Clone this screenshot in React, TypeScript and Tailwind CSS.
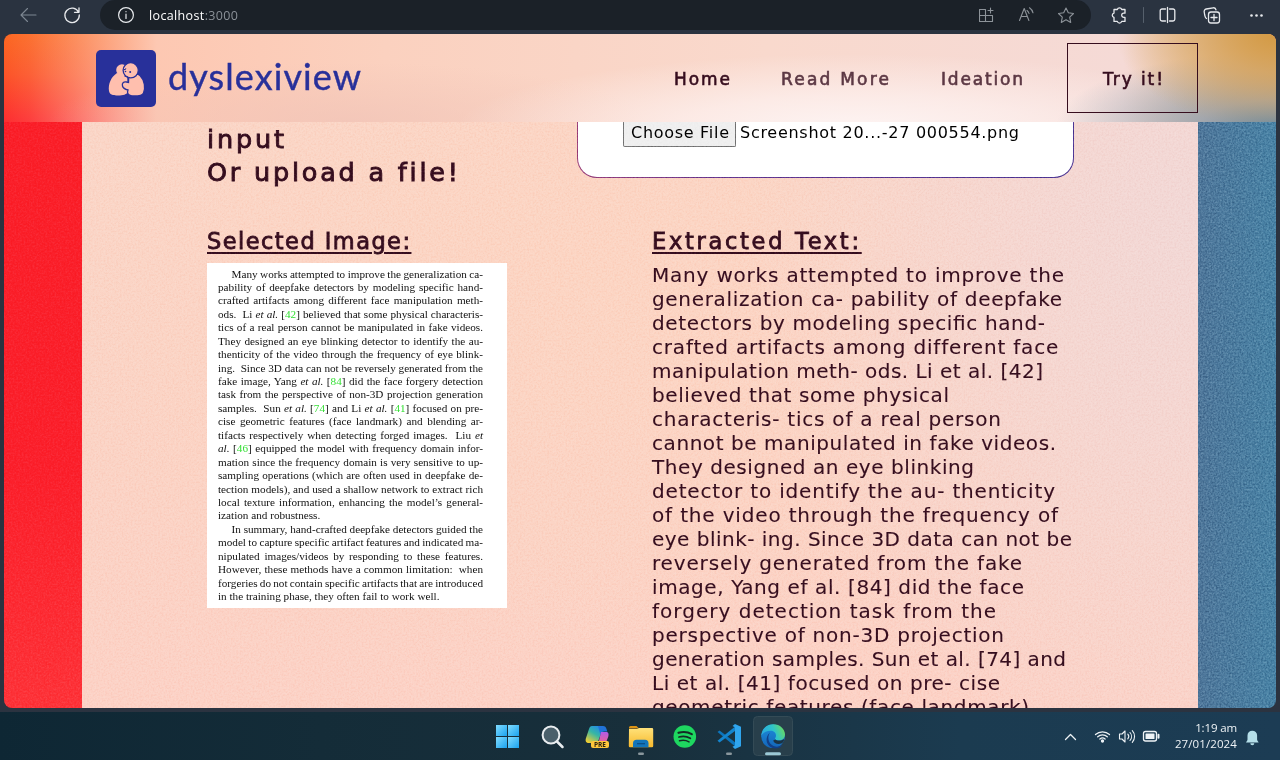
import { useLayoutEffect, useRef, type ReactNode } from 'react';

/** Text on one line whose tracking is adjusted so that it is `w` pixels wide. */
function Fit({ w, className = '', children }: { w: number; className?: string; children: ReactNode }) {
  const ref = useRef<HTMLSpanElement>(null);
  useLayoutEffect(() => {
    const el = ref.current;
    if (!el) return;
    el.style.letterSpacing = '0px';
    const n = (el.textContent || '').length;
    el.style.letterSpacing = `${(w - el.getBoundingClientRect().width) / Math.max(1, n - 1)}px`;
  }, [w]);
  return (
    <span ref={ref} className={`inline-block whitespace-nowrap ${className}`}>
      {children}
    </span>
  );
}

const extracted: [string, number][] = [
  ['Many works attempted to improve the', 412],
  ['generalization ca- pability of deepfake', 410],
  ['detectors by modeling speciﬁc hand-', 393],
  ['crafted artifacts among different face', 406],
  ['manipulation meth- ods. Li et al. [42]', 391],
  ['believed that some physical', 297],
  ['characteris- tics of a real person', 349],
  ['cannot be manipulated in fake videos.', 404],
  ['They designed an eye blinking', 322],
  ['detector to identify the au- thenticity', 403],
  ['of the video through the frequency of', 406],
  ['eye blink- ing. Since 3D data can not be', 420],
  ['reversely generated from the fake', 370],
  ['image, Yang ef al. [84] did the face', 372],
  ['forgery detection task from the', 344],
  ['perspective of non-3D projection', 352],
  ['generation samples. Sun et al. [74] and', 414],
  ['Li et al. [41] focused on pre- cise', 348],
  ['geometric features (face landmark)', 377],
];

const G = ({ children }: { children: string }) => <span className="text-[#35e035]">{children}</span>;

const paper: { t: ReactNode; indent?: boolean; end?: boolean }[] = [
  { t: 'Many works attempted to improve the generalization ca-', indent: true },
  { t: 'pability of deepfake detectors by modeling specific hand-' },
  { t: 'crafted artifacts among different face manipulation meth-' },
  { t: <>ods.&nbsp; Li <i>et al.</i> [<G>42</G>] believed that some physical characteris-</> },
  { t: 'tics of a real person cannot be manipulated in fake videos.' },
  { t: 'They designed an eye blinking detector to identify the au-' },
  { t: 'thenticity of the video through the frequency of eye blink-' },
  { t: <>ing.&nbsp; Since 3D data can not be reversely generated from the</> },
  { t: <>fake image, Yang <i>et al.</i> [<G>84</G>] did the face forgery detection</> },
  { t: 'task from the perspective of non-3D projection generation' },
  { t: <>samples.&nbsp; Sun <i>et al.</i> [<G>74</G>] and Li <i>et al.</i> [<G>41</G>] focused on pre-</> },
  { t: 'cise geometric features (face landmark) and blending ar-' },
  { t: <>tifacts respectively when detecting forged images.&nbsp; Liu <i>et</i></> },
  { t: <><i>al.</i> [<G>46</G>] equipped the model with frequency domain infor-</> },
  { t: 'mation since the frequency domain is very sensitive to up-' },
  { t: 'sampling operations (which are often used in deepfake de-' },
  { t: 'tection models), and used a shallow network to extract rich' },
  { t: 'local texture information, enhancing the model’s general-' },
  { t: 'ization and robustness.', end: true },
  { t: 'In summary, hand-crafted deepfake detectors guided the', indent: true },
  { t: 'model to capture specific artifact features and indicated ma-' },
  { t: 'nipulated images/videos by responding to these features.' },
  { t: <>However, these methods have a common limitation:&nbsp; when</> },
  { t: 'forgeries do not contain specific artifacts that are introduced' },
  { t: 'in the training phase, they often fail to work well.', end: true },
];

function PaperLine({ t, indent, end }: { t: ReactNode; indent?: boolean; end?: boolean }) {
  const ref = useRef<HTMLSpanElement>(null);
  useLayoutEffect(() => {
    const el = ref.current;
    if (!el || end) return;
    el.style.wordSpacing = '0px';
    const gaps = ((el.textContent || '').match(/[ \u00a0]/g) || []).length;
    const target = indent ? 251.5 : 265;
    el.style.wordSpacing = `${(target - el.getBoundingClientRect().width) / gaps}px`;
  }, [indent, end]);
  return (
    <div className={`h-[13.45px] whitespace-nowrap ${indent ? 'pl-[13.5px]' : ''}`}>
      <span ref={ref} className="inline-block">{t}</span>
    </div>
  );
}

function Grain() {
  return (
    <svg className="h-full w-full" aria-hidden="true">
      <filter id="grain" x="0" y="0" width="100%" height="100%" colorInterpolationFilters="sRGB">
        <feTurbulence type="fractalNoise" baseFrequency="0.55" numOctaves="2" seed="4" />
        <feColorMatrix type="matrix" values="2 0 0 0 -0.5  2 0 0 0 -0.5  2 0 0 0 -0.5  0 0 0 0 1" />
      </filter>
      <rect width="100%" height="100%" filter="url(#grain)" />
    </svg>
  );
}

const line = { fill: 'none', stroke: 'currentColor', strokeLinecap: 'round', strokeLinejoin: 'round' } as const;

function BrowserBar() {
  return (
    <div className="flex h-[34px] items-start bg-[#2a3340] text-[#e8eaed]">
      <svg width="100" height="30" {...line} strokeWidth="1.1">
        <path d="M36 15H21M27.5 8.500 21 15l6.500 6.500" stroke="#7d8792" />
        <path d="M78.600 12.200A7.200 7.200 0 1 0 79.300 15M79 7.800v4.500h-4.500" strokeWidth="1.300" />
      </svg>
      <div className="flex h-[30px] w-[991px] items-center rounded-[15px] bg-[#1b2128] pl-[18px]">
        <svg width="16" height="16" {...line} strokeWidth="1.200">
          <circle cx="8" cy="8" r="7.400" />
          <path d="M8 7.200v4.300M8 4.500v.2" />
        </svg>
        <div className="ml-[15px] flex-1 pt-px font-['Open_Sans','Noto_Sans',sans-serif] text-[12.500px] leading-[30px] text-white">
          <Fit w={89}>localhost<span className="text-[#8b9198]">:3000</span></Fit>
        </div>
        <svg width="112" height="30" className="text-[#8d9399]" {...line} strokeWidth="1.100">
          <path d="M6.500 9.500H.5v12h13v-6H.5M6.500 9.500v12M11.500 8v5M9 10.500h5" />
          <path d="m40.500 20.500 4.700-12 4.700 12M42 16.500h6.300M48 10.500a5 5 0 0 1 2 3M50.500 7.800a8.500 8.500 0 0 1 3.500 5" />
          <path d="m87 8 2.300 4.800 5.200.7-3.800 3.600 1 5.300-4.700-2.600-4.700 2.600 1-5.300-3.800-3.600 5.200-.7z" />
        </svg>
      </div>
      <svg width="189" height="34" {...line} strokeWidth="1.300">
        <path d="M24 9.500h2.300a2.300 2.300 0 0 1 4.400 0H34v3.700h-1.200a2.100 2.100 0 0 0 0 4.200H34v4h-3.300a2.300 2.300 0 0 1-4.400 0H23v-4a2.200 2.200 0 0 1 0-4.300V9.500z" />
        <path d="M52.500 7.500v15" stroke="#56606c" strokeWidth="1" />
        <path d="M74.500 9h-3.500a1.800 1.800 0 0 0-1.800 1.800v8.500A1.800 1.800 0 0 0 71 21h3.500M76.500 7.500v15M78.500 9H82a1.800 1.800 0 0 1 1.800 1.800v8.500A1.800 1.800 0 0 1 82 21h-3.500" />
        <rect x="117.500" y="12" width="11" height="11" rx="2.500" />
        <path d="M123 14.500v6M120 17.500h6M115.500 18.500c-1.500-.8-1.300-2-1.800-3.500l-.5-3a2.500 2.500 0 0 1 2-3l7-1.200a2.500 2.500 0 0 1 2.800 2" />
        <g fill="currentColor" stroke="none">
          <circle cx="160.500" cy="15.500" r="1.300" /><circle cx="165.500" cy="15.500" r="1.300" /><circle cx="170.500" cy="15.500" r="1.300" />
        </g>
      </svg>
    </div>
  );
}

function HugLogo() {
  return (
    <svg width="60" height="58" viewBox="0 0 60 58">
      <rect width="60" height="57" rx="5" fill="#28309a" />
      <g fill="#ffbfae">
        <circle cx="26" cy="20" r="5.800" />
        <path d="M21 23c-6 4-9 11-8 18 .5 4 5 4.500 9 4.500 5 0 9-1 10-4l-1-17z" />
      </g>
      <g fill="#ffbfae" stroke="#28309a" strokeWidth="1.300">
        <path d="M33 26c2-2 9-2.500 11-.5 5 5 5.500 13 3.500 17.500-1 2.600-6 3-9 3-4 0-7-1-7-4l.5-2c-2-.5-5-2-5.500-4-.8-3 1-4.500 4-4l2 .5c0-2 .2-4.500.5-6.500z" />
        <circle cx="34.700" cy="20.300" r="7.600" />
      </g>
      <g fill="none" stroke="#28309a" strokeWidth="1.100">
        <path d="M27.500 19.500c1.200.3 2 0 2.400-1.200M28.500 26l3.500 1" />
      </g>
      <circle cx="34.200" cy="22" r="1" fill="#28309a" /><circle cx="29.500" cy="21.500" r=".8" fill="#28309a" />
    </svg>
  );
}

function SiteHeader() {
  return (
    <header className="flex h-[88px] items-start bg-[radial-gradient(ellipse_160px_95px_at_100%_0%,#d39a44_0%,rgba(215,165,95,0.8)_40%,rgba(240,215,205,0)_100%),radial-gradient(ellipse_220px_75px_at_100%_105%,#6f8b9f_0%,rgba(150,160,172,0.85)_35%,rgba(240,220,215,0)_100%),radial-gradient(ellipse_400px_75px_at_67%_108%,rgba(253,244,243,1)_0%,rgba(253,240,238,0.75)_45%,rgba(250,225,218,0)_100%),radial-gradient(ellipse_300px_60px_at_27%_100%,rgba(240,195,183,0.7)_0%,rgba(240,195,183,0)_100%),linear-gradient(90deg,rgba(255,192,165,0)_0%,rgba(253,206,186,0.1)_2%,rgba(253,202,181,0.4)_5.500%,rgba(253,202,181,0.98)_12%,#fbd1bf_30%,#f9d9cd_60%,#f5dad6_88%,#ecc9ac_94%,#dfad70_100%),linear-gradient(180deg,#fb6721_0%,#fc5427_45%,#fd2d30_100%)] pl-[92px]">
      <div className="mt-[16px]"><HugLogo /></div>
      <div className="ml-[12px] mt-[15px] w-[480px] font-[Lato,'Open_Sans',sans-serif] text-[36px] leading-[54px] text-[#28309a] [-webkit-text-stroke:0.400px_currentColor]">
        <Fit w={193}>dyslexiview</Fit>
      </div>
      <nav className="flex flex-1 font-['DejaVu_Sans',sans-serif] text-[17px] leading-[90px] text-[#5c3844] [-webkit-text-stroke:0.600px_currentColor]">
        <div className="ml-[26px] w-[107px] text-[#360d1e]"><Fit w={56}>Home</Fit></div>
        <div className="w-[160px]"><Fit w={108}>Read More</Fit></div>
        <div className="w-[126px]"><Fit w={82}>Ideation</Fit></div>
        <div className="mt-[9px] h-[70px] w-[131px] border border-[#360d1e] pl-[35px] leading-[71px] text-[#360d1e]">
          <Fit w={60}>Try it!</Fit>
        </div>
      </nav>
    </header>
  );
}

function Content() {
  return (
    <div className="relative flex h-[586px] overflow-hidden">
      <div className="w-[78px] bg-[linear-gradient(180deg,#fa1f29_0%,#fb202c_60%,#fd3339_100%)]" />
      <main className="flex w-[1116px] flex-col bg-[radial-gradient(ellipse_450px_600px_at_100%_15%,#f2d8d6_0%,rgba(243,216,214,0.7)_40%,rgba(250,215,205,0)_100%),radial-gradient(ellipse_600px_400px_at_45%_25%,#fcd5c3_0%,rgba(252,212,195,0)_100%),linear-gradient(180deg,#fad6c8_0%,#fbd3c5_60%,#fcd2c6_100%)] font-['DejaVu_Sans',sans-serif] text-[#360d1e]">
        <div className="flex h-[101px] shrink-0">
          <div className="w-[495px] pl-[125px] text-[25.500px] leading-[34px] [-webkit-text-stroke:0.900px_currentColor]">
            <div><Fit w={77}>input</Fit></div>
            <div className="-mt-px"><Fit w={251}>Or upload a file!</Fit></div>
          </div>
          <div className="h-[56px] w-[497px] rounded-b-[20px] bg-[linear-gradient(90deg,#9b3f7a,#62348f_30%,#4c3594)] px-px pb-px">
            <div className="flex h-full items-start rounded-b-[19px] bg-white pl-[45px] text-[16px] text-black">
              <div className="h-[25px] w-[113px] rounded-b-[2px] border border-t-0 border-[#767676] bg-[#efefef] pl-[7px] leading-[21px]">
                <Fit w={98}>Choose File</Fit>
              </div>
              <div className="pl-[4px] leading-[21px]">
                <Fit w={279}>Screenshot 20...-27 000554.png</Fit>
              </div>
            </div>
          </div>
        </div>
        <div className="flex shrink-0">
          <section className="w-[444px] pl-[125px]">
            <h2 className="h-[40px] text-[22.500px] leading-[36px] [-webkit-text-stroke:0.800px_currentColor]">
              <Fit w={203} className="underline decoration-2 underline-offset-[3px]">Selected Image:</Fit>
            </h2>
            <div className="h-[345px] w-[300px] bg-white pl-[11px] pt-[4.500px] font-['Liberation_Serif',serif] text-[11.200px] leading-[13.450px] text-[#111]">
              {paper.map((p, i) => (
                <PaperLine key={i} {...p} />
              ))}
            </div>
          </section>
          <section className="pl-[126px]">
            <h2 className="h-[40px] text-[22.500px] leading-[36px] [-webkit-text-stroke:0.800px_currentColor]">
              <Fit w={207} className="underline decoration-2 underline-offset-[3px]">Extracted Text:</Fit>
            </h2>
            <div className="text-[20px] leading-[24px] [-webkit-text-stroke:0.100px_currentColor]">
              {extracted.map(([t, w]) => (
                <div key={t} className="h-[24px]"><Fit w={w}>{t}</Fit></div>
              ))}
            </div>
          </section>
        </div>
      </main>
      <div className="flex-1 bg-[linear-gradient(90deg,#4e779b,#4883a6)]" />
      <div className="pointer-events-none absolute inset-0 opacity-20 mix-blend-soft-light"><Grain /></div>
      <div className="pointer-events-none absolute inset-y-0 right-0 w-[78px] opacity-25 mix-blend-soft-light"><Grain /></div>
    </div>
  );
}

function Taskbar() {
  return (
    <footer className="flex h-[48px] items-center bg-[linear-gradient(90deg,#0e2734_0%,#142c38_25%,#182f3b_50%,#1b3b50_75%,#1c3c54_100%)]">
      <svg width="1050" height="48" viewBox="0 0 1050 48">
        <defs>
          <linearGradient id="win" x2="1" y2="1"><stop stopColor="#80dcff" /><stop offset="1" stopColor="#1aa2ef" /></linearGradient>
          <linearGradient id="cpa" x1=".8" y1="0" x2=".2" y2="1"><stop stopColor="#2389e8" /><stop offset=".45" stopColor="#36b6a5" /><stop offset="1" stopColor="#f4cf30" /></linearGradient>
          <linearGradient id="cpb" x1=".5" y1="0" x2=".5" y2="1"><stop stopColor="#b35be8" /><stop offset="1" stopColor="#f0648b" /></linearGradient>
          <linearGradient id="fold" x2="0" y2="1"><stop stopColor="#ffe27a" /><stop offset="1" stopColor="#f7b92d" /></linearGradient>
          <linearGradient id="edA" y1=".6" x2="1" y2=".3"><stop stopColor="#2aa7e0" /><stop offset=".55" stopColor="#2fc3c9" /><stop offset="1" stopColor="#6bdb5c" /></linearGradient>
          <linearGradient id="edB" x2="0" y2="1"><stop stopColor="#1d8ddc" /><stop offset="1" stopColor="#1466b8" /></linearGradient>
        </defs>
        <g fill="url(#win)">
          <rect x="496" y="13" width="11" height="11" /><rect x="508" y="13" width="11" height="11" />
          <rect x="496" y="25" width="11" height="11" /><rect x="508" y="25" width="11" height="11" />
        </g>
        <circle cx="551" cy="23" r="8.400" fill="#4a606b" stroke="#e9edf0" strokeWidth="2" />
        <path d="m557 29.500 5.500 5.500" stroke="#e9edf0" strokeWidth="2.500" strokeLinecap="round" />
        <path d="M592 14h8c2 0 3 1 2.500 3L599 27c-1 3-2 4-5 4h-5c-3 0-4-2-3-5l3-9c.6-2 1.500-3 3-3z" fill="url(#cpa)" />
        <path d="M598 14h5c2 0 3 1 3.500 3l.8 2.500h-3c-2 0-3 1-3.800 3.500z" fill="#2173d8" />
        <path d="M601 20h5c2.500 0 3 2 2.300 4.500l-1.500 4c-.8 2.500-2 3.500-4 3.500h-7c2 0 2.800-2 3.400-4z" fill="url(#cpb)" />
        <rect x="591" y="29" width="18" height="7" rx="2" fill="#ffc83c" />
        <text x="600" y="35" textAnchor="middle" fontSize="6.500" fontWeight="700" fontFamily="Open Sans, sans-serif" fill="#2b2410">PRE</text>
        <path d="M629 15.500a1.500 1.500 0 0 1 1.500-1.500h6l2.500 2.500h-10z" fill="#dd9414" />
        <path d="M629 17h8l2-1h13a1.200 1.200 0 0 1 1.200 1.200V34a1.200 1.200 0 0 1-1.200 1.200h-22a1.200 1.200 0 0 1-1.200-1.200z" fill="url(#fold)" />
        <path d="M633 35.200v-4a3.500 3.500 0 0 1 3.500-3.500h8.500a3.500 3.500 0 0 1 3.500 3.500v4z" fill="#1475ba" />
        <path d="M637 31.700h8" stroke="#0d4c82" strokeWidth="1.200" />
        <circle cx="684.800" cy="24.500" r="11.300" fill="#1ed760" />
        <g fill="none" stroke="#142c25" strokeLinecap="round">
          <path d="M678.500 20.800c4.500-1.300 9.500-.8 13.300 1.300" strokeWidth="2.200" />
          <path d="M679 25c4-1.100 8-.6 11.300 1.200" strokeWidth="1.800" />
          <path d="M679.500 28.800c3.400-.9 6.700-.5 9.500 1.100" strokeWidth="1.500" />
        </g>
        <path d="m717.500 20 2-1.600 17.500 13.300V36z" fill="#0c75bd" />
        <path d="m717.500 28.700 2 1.800L737 17.500V13z" fill="#1485cf" />
        <path d="m735 12 6 2.700v19.500l-6 2.800-2.500-2.200 2.500-1.300V15.300l-2.500-1.200z" fill="#2fa5ee" />
        <rect x="753.500" y="4.500" width="39" height="39" rx="4" fill="#283f4b" stroke="#344b56" />
        <circle cx="773" cy="24.300" r="11.800" fill="url(#edB)" />
        <path d="M761.200 24c.3-7 5.500-11.700 12-11.700 7 0 11.800 5 11.800 10.200 0 3.700-2.800 6-6 6-2.500 0-4-1-4-1.800s1-1.400 1-3.300c0-2.500-2.500-4.600-5.500-4.600-4 0-8 2-9.300 5.200z" fill="url(#edA)" />
        <path d="M770 20.500c-3 4-2 11 3.500 13.500 3.500 1.600 7 .4 9.600-1.500-3 4.500-8.500 4.500-11.500 3-5-2-7.500-10-1.600-15z" fill="#123f87" />
        <path d="M775.500 27.500c1.500 1.600 6 1.500 8.500-.5.300 1.600-.5 3-2 4.300-4.500 2-8-.1-8.800-2.800z" fill="#1b3344" />
        <rect x="638" y="40.500" width="6" height="2.600" rx="1.300" fill="#8a979d" />
        <rect x="726" y="40.500" width="6" height="2.600" rx="1.300" fill="#8a979d" />
        <rect x="765" y="40.300" width="16" height="3" rx="1.500" fill="#9bc9d6" />
      </svg>
      <svg width="116" height="48" className="text-[#eef3f6]" {...line} strokeWidth="1.300">
        <path d="m15.500 27.500 5-5 5 5" />
        <path d="M45.500 22.500a10.500 10.500 0 0 1 14 0M47.700 24.800a7.200 7.200 0 0 1 9.600 0M49.900 27a4 4 0 0 1 5.200 0" />
        <circle cx="52.500" cy="29" r="1" fill="currentColor" />
        <path d="M69.500 22h2.500l3-3v11l-3-3h-2.500zM77.800 22.200a3.500 3.500 0 0 1 0 4.600M80 20.500a6 6 0 0 1 0 8M82.300 18.700a8.600 8.600 0 0 1 0 11.600" strokeWidth="1.100" />
        <rect x="93.500" y="19.500" width="13" height="9.500" rx="2" />
        <rect x="95.500" y="21.500" width="9" height="5.500" rx=".5" fill="currentColor" stroke="none" />
        <path d="M108.500 22.700v3" strokeWidth="2" />
      </svg>
      <div className="w-[71px] text-right font-['Open_Sans','Noto_Sans',sans-serif] text-[11.500px] leading-[16px] text-[#eef3f6]">
        <div><Fit w={42}>1:19 am</Fit></div>
        <div><Fit w={62}>27/01/2024</Fit></div>
      </div>
      <svg width="30" height="48" fill="#b5dfe9">
        <path d="M9 30.500c0-.8 1.500-1.500 1.500-3v-4a4.800 4.800 0 0 1 9.600 0v4c0 1.500 1.500 2.200 1.500 3zM13.300 31.300h4a2 2 0 0 1-4 0z" />
      </svg>
    </footer>
  );
}

export default function App() {
  return (
    <div className="flex h-[760px] w-[1280px] flex-col overflow-hidden bg-[#2b3340]">
      <BrowserBar />
      <div className="mx-[4px] h-[674px] overflow-hidden rounded-[8px]">
        <SiteHeader />
        <Content />
      </div>
      <div className="h-[4px]" />
      <Taskbar />
    </div>
  );
}
